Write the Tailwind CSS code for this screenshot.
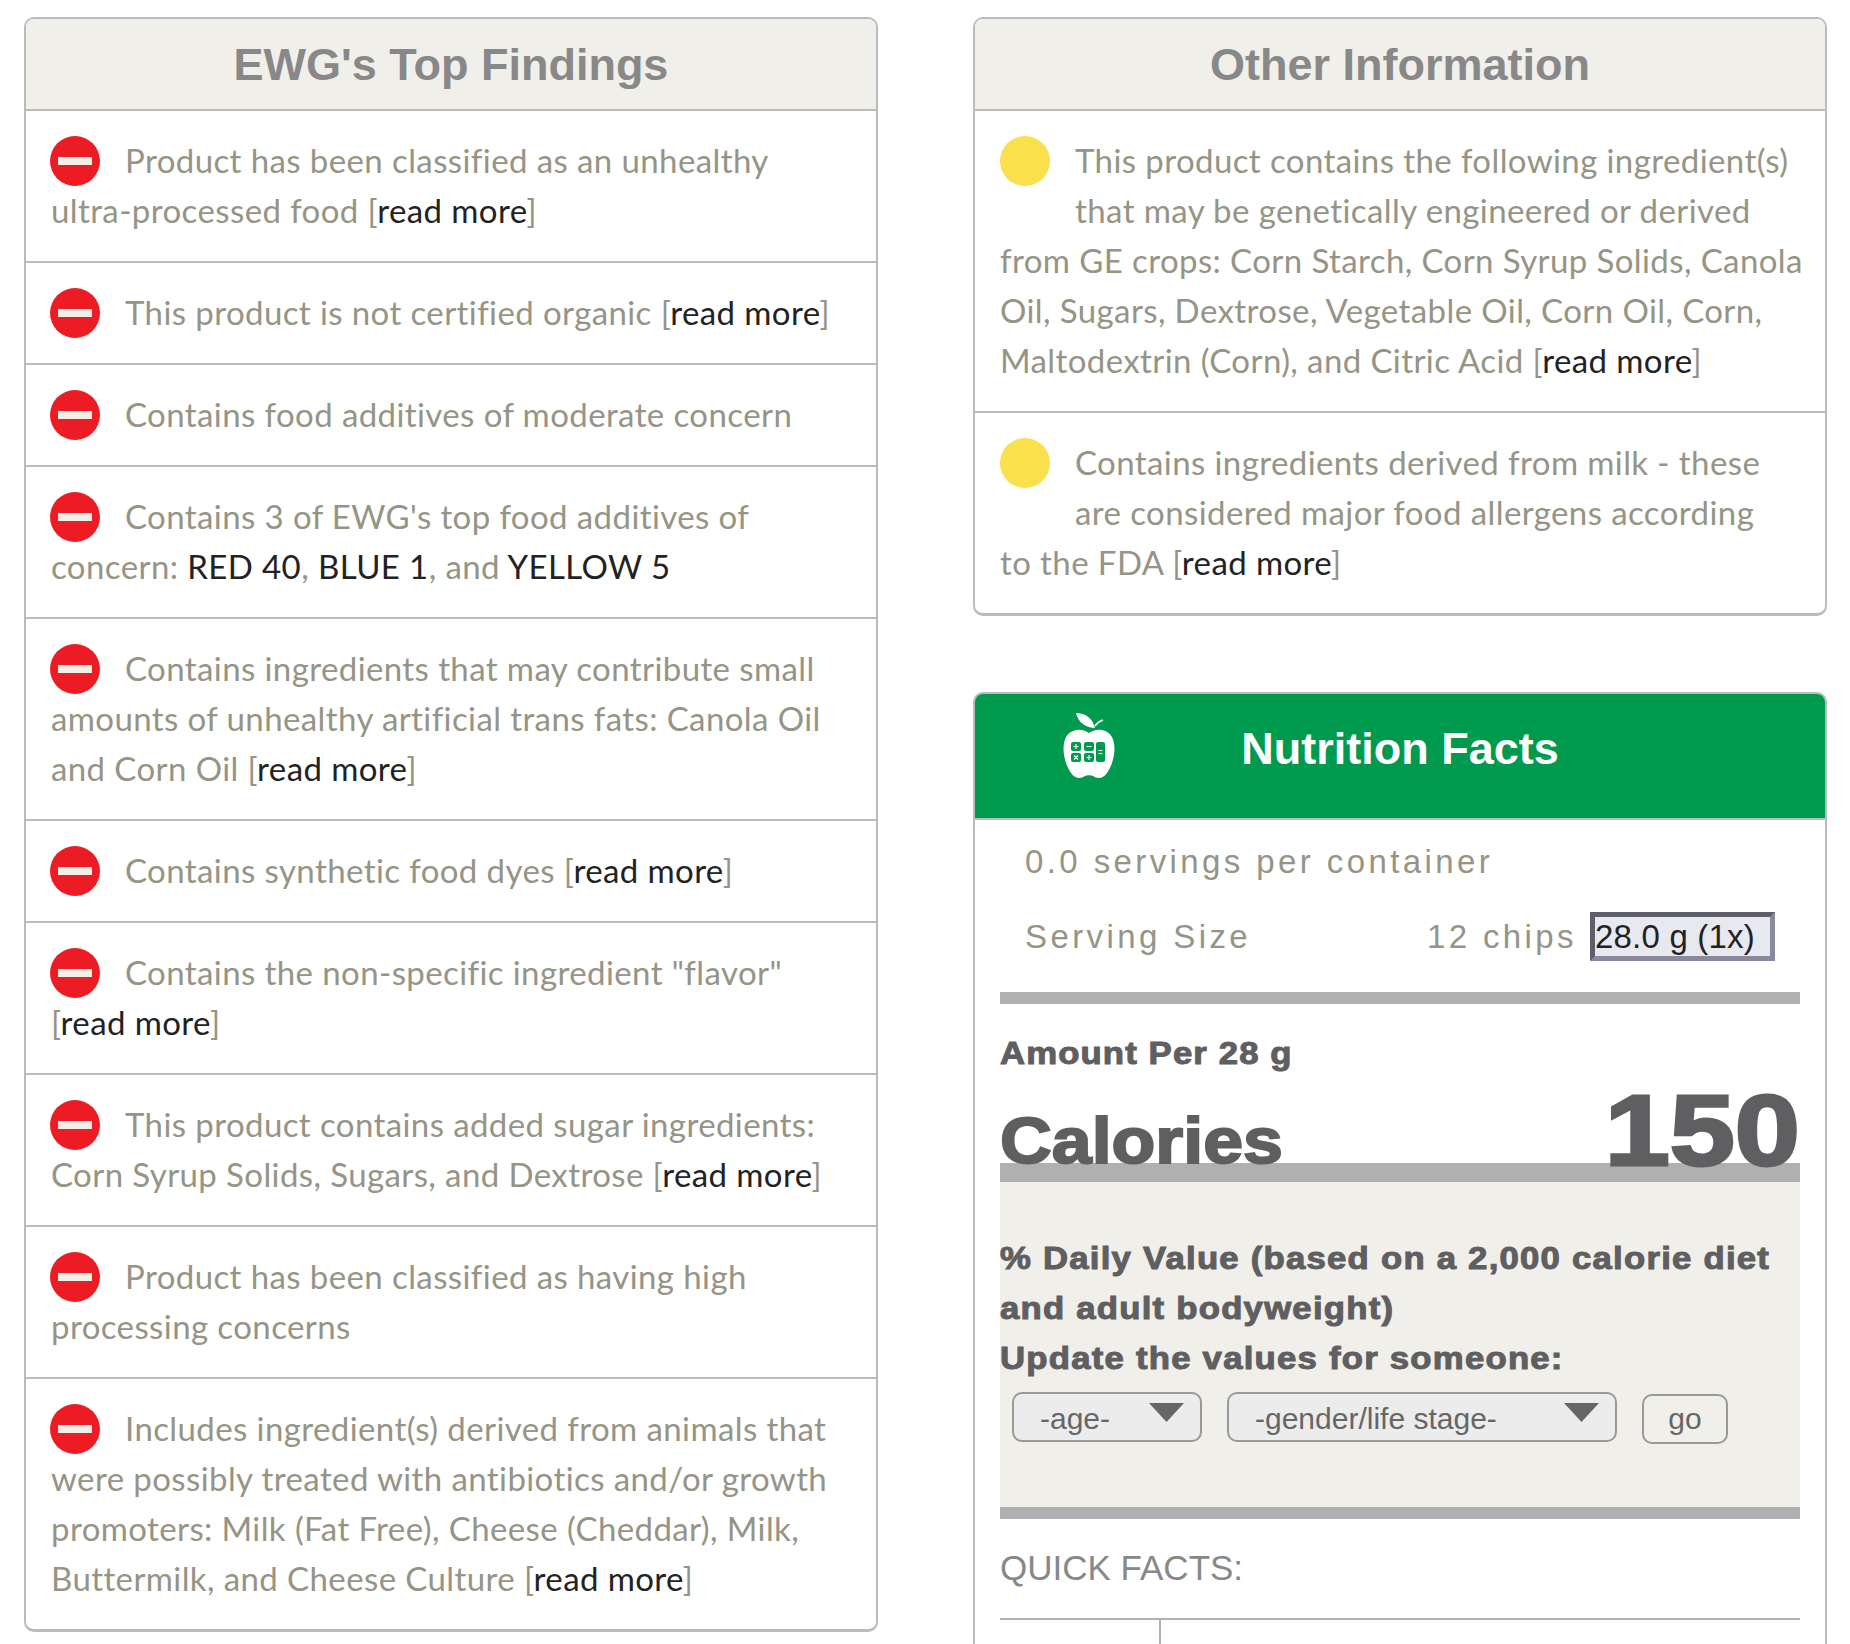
<!DOCTYPE html>
<html lang="en">
<head>
    <meta charset="UTF-8">
    <title>Food Scores</title>
    <script src="https://cdn.jsdelivr.net/npm/@tailwindcss/browser@4"></script>
</head>
<body class="bg-white font-['Lato',sans-serif] text-[33px] tracking-[0.4px] leading-[50px] text-[#959485] h-[1644px] overflow-hidden">
    <div class="grid grid-cols-[854px_854px] gap-x-[95px] pl-[24px] pt-[17px] items-start">

        <!-- top findings -->
        <div class="border-2 border-b-[3px] border-[#bbbbbb] rounded-[10px] overflow-hidden">
            <h2 class="h-[92px] pt-[2px] bg-[#f0efea] border-b-2 border-[#bbbbbb] flex items-center justify-center font-['Liberation_Sans',sans-serif] font-bold text-[45px] tracking-normal text-[#888888]">EWG's Top Findings</h2>

            <div class="pl-[25px] pr-[24px] pt-[24px] pb-[26px] border-b-2 border-[#bbbbbb]">
                <span class="float-left -ml-[1px] mt-[1px] -mb-[1px] mr-[25px] w-[50px] h-[50px] rounded-full bg-[#ed1c24] flex items-center justify-center"><span class="w-[34px] h-[8px] bg-[#f4efe6]"></span></span>
                Product has been classified as an unhealthy ultra-processed food [<a class="text-[#222222]">read more</a>]
            </div>
            <div class="pl-[25px] pr-[24px] pt-[24px] pb-[26px] border-b-2 border-[#bbbbbb]">
                <span class="float-left -ml-[1px] mt-[1px] -mb-[1px] mr-[25px] w-[50px] h-[50px] rounded-full bg-[#ed1c24] flex items-center justify-center"><span class="w-[34px] h-[8px] bg-[#f4efe6]"></span></span>
                This product is not certified organic [<a class="text-[#222222]">read more</a>]
            </div>
            <div class="pl-[25px] pr-[24px] pt-[24px] pb-[26px] border-b-2 border-[#bbbbbb]">
                <span class="float-left -ml-[1px] mt-[1px] -mb-[1px] mr-[25px] w-[50px] h-[50px] rounded-full bg-[#ed1c24] flex items-center justify-center"><span class="w-[34px] h-[8px] bg-[#f4efe6]"></span></span>
                Contains food additives of moderate concern
            </div>
            <div class="pl-[25px] pr-[24px] pt-[24px] pb-[26px] border-b-2 border-[#bbbbbb]">
                <span class="float-left -ml-[1px] mt-[1px] -mb-[1px] mr-[25px] w-[50px] h-[50px] rounded-full bg-[#ed1c24] flex items-center justify-center"><span class="w-[34px] h-[8px] bg-[#f4efe6]"></span></span>
                Contains 3 of EWG's top food additives of concern: <a class="text-[#222222]">RED 40</a>, <a class="text-[#222222]">BLUE 1</a>, and <a class="text-[#222222]">YELLOW 5</a>
            </div>
            <div class="pl-[25px] pr-[24px] pt-[24px] pb-[26px] border-b-2 border-[#bbbbbb]">
                <span class="float-left -ml-[1px] mt-[1px] -mb-[1px] mr-[25px] w-[50px] h-[50px] rounded-full bg-[#ed1c24] flex items-center justify-center"><span class="w-[34px] h-[8px] bg-[#f4efe6]"></span></span>
                Contains ingredients that may contribute small amounts of unhealthy artificial trans fats: Canola Oil and Corn Oil [<a class="text-[#222222]">read more</a>]
            </div>
            <div class="pl-[25px] pr-[24px] pt-[24px] pb-[26px] border-b-2 border-[#bbbbbb]">
                <span class="float-left -ml-[1px] mt-[1px] -mb-[1px] mr-[25px] w-[50px] h-[50px] rounded-full bg-[#ed1c24] flex items-center justify-center"><span class="w-[34px] h-[8px] bg-[#f4efe6]"></span></span>
                Contains synthetic food dyes [<a class="text-[#222222]">read more</a>]
            </div>
            <div class="pl-[25px] pr-[24px] pt-[24px] pb-[26px] border-b-2 border-[#bbbbbb]">
                <span class="float-left -ml-[1px] mt-[1px] -mb-[1px] mr-[25px] w-[50px] h-[50px] rounded-full bg-[#ed1c24] flex items-center justify-center"><span class="w-[34px] h-[8px] bg-[#f4efe6]"></span></span>
                Contains the non-specific ingredient "flavor" [<a class="text-[#222222]">read more</a>]
            </div>
            <div class="pl-[25px] pr-[24px] pt-[24px] pb-[26px] border-b-2 border-[#bbbbbb]">
                <span class="float-left -ml-[1px] mt-[1px] -mb-[1px] mr-[25px] w-[50px] h-[50px] rounded-full bg-[#ed1c24] flex items-center justify-center"><span class="w-[34px] h-[8px] bg-[#f4efe6]"></span></span>
                This product contains added sugar ingredients: Corn Syrup Solids, Sugars, and Dextrose [<a class="text-[#222222]">read more</a>]
            </div>
            <div class="pl-[25px] pr-[24px] pt-[24px] pb-[26px] border-b-2 border-[#bbbbbb]">
                <span class="float-left -ml-[1px] mt-[1px] -mb-[1px] mr-[25px] w-[50px] h-[50px] rounded-full bg-[#ed1c24] flex items-center justify-center"><span class="w-[34px] h-[8px] bg-[#f4efe6]"></span></span>
                Product has been classified as having high processing concerns
            </div>
            <div class="pl-[25px] pr-[24px] pt-[24px] pb-[26px]">
                <span class="float-left -ml-[1px] mt-[1px] -mb-[1px] mr-[25px] w-[50px] h-[50px] rounded-full bg-[#ed1c24] flex items-center justify-center"><span class="w-[34px] h-[8px] bg-[#f4efe6]"></span></span>
                Includes ingredient(s) derived from animals that were possibly treated with antibiotics and/or growth promoters: Milk (Fat Free), Cheese (Cheddar), Milk, Buttermilk, and Cheese Culture [<a class="text-[#222222]">read more</a>]
            </div>
        </div>

        <div class="flex flex-col gap-[76px]">
            <!-- other information -->
            <div class="border-2 border-b-[3px] border-[#bbbbbb] rounded-[10px] overflow-hidden">
                <h2 class="h-[92px] pt-[2px] bg-[#f0efea] border-b-2 border-[#bbbbbb] flex items-center justify-center font-['Liberation_Sans',sans-serif] font-bold text-[45px] tracking-normal text-[#888888]">Other Information</h2>
                <div class="pl-[25px] pr-[10px] pt-[24px] pb-[26px] border-b-2 border-[#bbbbbb]">
                    <span class="float-left mt-[1px] mr-[25px] mb-[10px] w-[50px] h-[50px] rounded-full bg-[#f9e04c]"></span>
                    This product contains the following ingredient(s) that may be genetically engineered or derived<br>from GE crops: Corn Starch, Corn Syrup Solids, Canola<br>Oil, Sugars, Dextrose, Vegetable Oil, Corn Oil, Corn,<br>Maltodextrin (Corn), and Citric Acid [<a class="text-[#222222]">read more</a>]
                </div>
                <div class="pl-[25px] pr-[24px] pt-[24px] pb-[26px]">
                    <span class="float-left mt-[1px] mr-[25px] mb-[10px] w-[50px] h-[50px] rounded-full bg-[#f9e04c]"></span>
                    Contains ingredients derived from milk - these are considered major food allergens according<br>to the FDA [<a class="text-[#222222]">read more</a>]
                </div>
            </div>

            <!-- nutrition facts -->
            <div class="border-x-2 border-t-2 border-[#bbbbbb] rounded-t-[10px] overflow-hidden font-['Liberation_Sans',sans-serif] tracking-normal">
                <div class="relative h-[126px] pb-[14px] bg-[#009a4e] border-b-2 border-[#bbbbbb] flex items-center justify-center font-bold text-[45px] text-white">
                    <svg class="absolute left-[88px] top-[19px]" width="52" height="66" viewBox="0 0 52 66">
                        <path fill="#fff" d="M26 20C20 15 8 15 3 24C-2 34 1 50 8 60C12 66 18 66 22 63C24 62 28 62 30 63C34 66 40 66 44 60C51 50 54 34 49 24C44 15 32 15 26 20Z"/>
                        <path fill="#fff" d="M13 0C20 0 29 3 32 15C24 15 15 10 13 0Z"/>
                        <path fill="none" stroke="#fff" stroke-width="1.5" d="M32 13C34 10 37 8 40 7"/>
                        <rect x="8" y="29" width="10" height="9" rx="2" fill="#009a4e"/>
                        <rect x="21" y="29" width="10" height="9" rx="2" fill="#009a4e"/>
                        <rect x="33" y="29" width="9" height="20" rx="2" fill="#009a4e"/>
                        <rect x="8" y="40" width="10" height="9" rx="2" fill="#009a4e"/>
                        <rect x="21" y="40" width="10" height="9" rx="2" fill="#009a4e"/>
                        <path fill="none" stroke="#fff" stroke-width="1.2" d="M10.5 33.5H15.5M13 31V36M23.5 33.5H28.5M35.5 37.5H39.5M35.5 40.5H39.5M11 42.5L15 46.5M15 42.5L11 46.5M23.5 44.5H28.5M26 42V47"/>
                    </svg>
                    Nutrition Facts
                </div>

                <div class="px-[25px]">
                    <p class="mt-[17px] pl-[25px] tracking-[3.4px]">0.0 servings per container</p>

                    <div class="mt-[25px] flex items-center h-[49px] pl-[25px] tracking-[3.4px]">
                        <span>Serving Size</span>
                        <span class="ml-auto mr-[13px]">12 chips</span>
                        <div class="w-[185px] h-[49px] mr-[25px] border-[5px] border-t-[#5f5f6b] border-l-[#5f5f6b] border-b-[#8a8a9c] border-r-[#8a8a9c] bg-[#e8e8f0] text-[#222222] tracking-[0.2px] leading-[40px] whitespace-nowrap overflow-hidden">28.0 g (1x)</div>
                    </div>

                    <div class="mt-[31px] h-[12px] bg-[#b0b0b0]"></div>

                    <p class="mt-[25px] font-bold text-[31px] tracking-[1px] text-[#5f5e60] origin-left scale-x-[1.12] [-webkit-text-stroke:1px_#5f5e60]">Amount Per 28 g</p>

                    <div class="h-[84px] pt-[1px] flex items-baseline justify-between font-bold leading-none text-[#5f5e60]">
                        <span class="inline-block text-[64px] origin-left scale-x-[1.12] -translate-y-[2px] [-webkit-text-stroke:2px_#5f5e60]">Calories</span>
                        <span class="inline-block text-[100px] origin-right scale-x-[1.17] [-webkit-text-stroke:3px_#5f5e60]">150</span>
                    </div>

                    <div class="h-[19px] bg-[#b0b0b0]"></div>

                    <div class="h-[325px] pt-[52px] bg-[#f0efea]">
                        <p class="w-[714px] font-bold text-[31px] tracking-[1.1px] text-[#5f5e60] origin-left scale-x-[1.12] [-webkit-text-stroke:1px_#5f5e60]">% Daily Value (based on a 2,000 calorie diet<br>and adult bodyweight)<br>Update the values for someone:</p>
                        <div class="mt-[8px] pl-[12px] flex items-start gap-[25px] text-[30px] text-[#666666]">
                            <div class="w-[190px] h-[50px] pl-[26px] pr-[16px] flex items-center justify-between bg-[#ececec] border-2 border-[#999999] rounded-[10px]">
                                <span class="mt-[3px]">-age-</span>
                                <svg class="mb-[10px]" width="35" height="19" viewBox="0 0 35 19"><polygon fill="#666666" points="0,0 35,0 17.5,19"/></svg>
                            </div>
                            <div class="w-[390px] h-[50px] pl-[26px] pr-[16px] flex items-center justify-between bg-[#ececec] border-2 border-[#999999] rounded-[10px]">
                                <span class="mt-[3px]">-gender/life stage-</span>
                                <svg class="mb-[10px]" width="35" height="19" viewBox="0 0 35 19"><polygon fill="#666666" points="0,0 35,0 17.5,19"/></svg>
                            </div>
                            <button class="mt-[2px] w-[86px] h-[50px] flex items-center justify-center border-2 border-[#999999] rounded-[10px]">go</button>
                        </div>
                    </div>

                    <div class="h-[12px] bg-[#b0b0b0]"></div>

                    <p class="mt-[24px] text-[35px] text-[#888888]">QUICK FACTS:</p>

                    <div class="mt-[25px] h-[60px] border-t-2 border-[#b0b0b0]">
                        <div class="w-[161px] h-full border-r-2 border-[#b0b0b0]"></div>
                    </div>
                </div>
            </div>
        </div>
    </div>
</body>
</html>
